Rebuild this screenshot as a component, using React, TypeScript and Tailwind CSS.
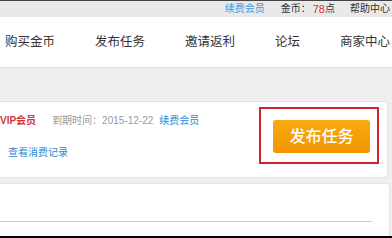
const font = { fontFamily: '"Liberation Sans", "Noto Sans CJK SC", sans-serif' };

const navItems = ["购买金币", "发布任务", "邀请返利", "论坛", "商家中心"];

export default function App() {
  return (
    <div
      className="relative flex h-[238px] w-[392px] flex-col overflow-hidden bg-[#efefef]"
      style={font}
    >
      {/* top bar */}
      <div className="flex h-[17px] shrink-0 items-center justify-end border-t border-[#444] bg-[#e9e9e9] pr-[2px] text-[10px] leading-none">
        <span className="text-[#3b9de2]">续费会员</span>
        <span className="ml-[16px] text-[#333]">金币：</span>
        <span className="ml-[2px] text-[11px] text-[#e0302e]">78</span>
        <span className="text-[#333]">点</span>
        <span className="ml-[15px] text-[#333]">帮助中心</span>
      </div>

      {/* nav */}
      <div className="flex h-[51px] shrink-0 items-center gap-[40px] whitespace-nowrap border-b border-[#dcdcdc] bg-white pl-[5px] text-[12.5px] text-[#333]">
        {navItems.map((item) => (
          <span key={item}>{item}</span>
        ))}
      </div>

      <div className="flex flex-1 flex-col pt-[33px]">
        {/* member card */}
        <div className="ml-[-10px] flex h-[77px] w-[398px] shrink-0 justify-between rounded-[4px] border border-[#e3e3e3] bg-white">
          <div className="flex flex-col pl-[9px] text-[10px] leading-none">
            <div className="mt-[14px] flex items-center whitespace-nowrap">
              <span className="font-bold text-[#d8343b]">VIP会员</span>
              <span className="ml-[16px] text-[#9a9a9a]">到期时间：2015-12-22</span>
              <span className="ml-[6px] text-[#2a8ad6]">续费会员</span>
            </div>
            <span className="ml-[8px] mt-[22px] text-[#2a8ad6]">查看消费记录</span>
          </div>
          <div className="mr-[8px] mt-[5px] h-[57px] w-[120px] border-2 border-[#d3222c]">
            <div className="ml-[12px] mt-[11px] flex h-[33px] w-[97px] items-center justify-center rounded-[3px] bg-gradient-to-b from-[#f8aa10] to-[#f29400] text-[16px] font-medium text-white">
              发布任务
            </div>
          </div>
        </div>

        {/* second card */}
        <div className="ml-[-10px] mt-[5px] flex w-[400px] flex-1 flex-col rounded-t-[4px] border border-b-0 border-[#e3e3e3] bg-white pr-[17px]">
          <div className="mt-[37px] h-px bg-[#f4c29c]" />
        </div>
      </div>

      <div className="h-[2px] shrink-0 bg-black" />
    </div>
  );
}
